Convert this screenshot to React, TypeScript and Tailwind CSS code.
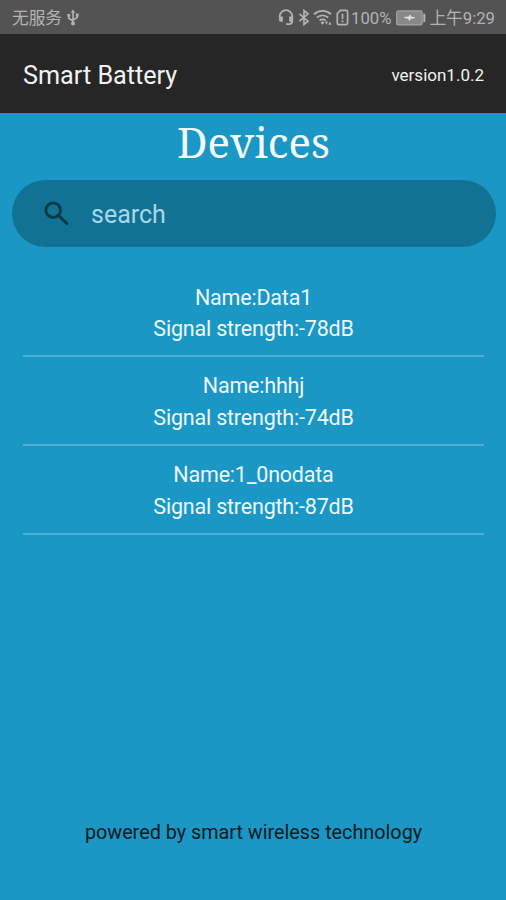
import React, {useState} from 'react';

interface Device {
    name: string;
    signal: number;
}

const DEVICES: Device[] = [
    {name: 'Data1', signal: -78},
    {name: 'hhhj', signal: -74},
    {name: '1_0nodata', signal: -87},
];

function UsbIcon() {
    return (
        <svg width="12" height="18" viewBox="0 0 12 18" fill="none" stroke="currentColor" strokeWidth="1.6">
            <path d="M6 3v11M1.8 7v2.2L6 12M10.2 6v2.5L6 11"/>
            <path d="M6 .6l2.3 3.2H3.7zM.4 5h2.8v2.8H.4zM8.8 4.6h2.8v2.8H8.8z" fill="currentColor" stroke="none"/>
            <circle cx="6" cy="14.4" r="2" fill="currentColor" stroke="none"/>
        </svg>
    );
}

function HeadsetIcon() {
    return (
        <svg width="16" height="17" viewBox="0 0 16 17" fill="none" stroke="currentColor" strokeWidth="1.7">
            <path d="M1.7 9V7.5a6.3 6.3 0 0 1 12.6 0V12c0 2-1.5 3.2-3.3 3.2H8"/>
            <path d="M1 7.5h3.8v5.3H3a2 2 0 0 1-2-2zM11.2 7.5H15v5.3h-3.8z" fill="currentColor" stroke="none"/>
        </svg>
    );
}

function BluetoothIcon() {
    return (
        <svg width="12" height="17" viewBox="0 0 12 17" fill="none" stroke="currentColor" strokeWidth="1.7">
            <path d="M1.5 4.8l8.5 7.4-4 3.3v-14l4 3.3-8.5 7.4"/>
        </svg>
    );
}

function WifiIcon() {
    return (
        <svg width="20" height="17" viewBox="0 0 20 17" fill="none" stroke="currentColor" strokeWidth="1.9">
            <path d="M1 5.2a12.5 12.5 0 0 1 17 0M3.8 8.6a8.3 8.3 0 0 1 11.4 0M6.5 11.6a4.3 4.3 0 0 1 6 0"/>
            <path d="M7.5 13.4l2-1.2 2 1.2-2 2.4zM12 12.6h3L13.5 15.8zM15.4 15.8l1.5-3.2 1.5 3.2z" fill="currentColor" stroke="none"/>
        </svg>
    );
}

function SimAlertIcon() {
    return (
        <svg width="13" height="17" viewBox="0 0 13 17" fill="none" stroke="currentColor" strokeWidth="1.7">
            <path d="M4.5 1.3H10q1.6 0 1.6 1.6v11.2q0 1.5-1.6 1.5H2.8q-1.5 0-1.5-1.5V4.5z"/>
            <path d="M6.5 4.8v5.2M6.5 11.3v1.9"/>
        </svg>
    );
}

function BatteryIcon() {
    return (
        <svg width="30" height="16" viewBox="0 0 30 16">
            <rect x=".7" y=".9" width="25.4" height="14" rx="1.5" fill="#888888" stroke="#a3a3a3" strokeWidth="1.2"/>
            <path d="M27.3 3.5h.6q1.4 0 1.4 1.4v6q0 1.4-1.4 1.4h-.6z" fill="#b3b3b3"/>
            <path d="M8 7.5l5-.7 1-2 .8 2 4 .9-4.3.9-1.2 2-.8-2z" fill="#e2e2e2" stroke="#e2e2e2" strokeWidth=".7"/>
        </svg>
    );
}

function StatusBar() {
    return (
        <div className="flex h-[34px] shrink-0 items-center bg-[#535353] pt-0.5 pr-[11px] pl-3 font-['Roboto','Noto_Sans_CJK_SC',sans-serif] text-[16.7px] leading-none text-[#b3b3b3]">
            <span className="pt-0.5">无服务</span>
            <span className="ml-[5px]"><UsbIcon/></span>
            <div className="ml-auto flex items-center">
                <HeadsetIcon/>
                <span className="ml-1"><BluetoothIcon/></span>
                <span className="ml-[3px]"><WifiIcon/></span>
                <span className="ml-[3px]"><SimAlertIcon/></span>
                <span className="ml-0.5 pt-0.5">100%</span>
                <span className="ml-[5px]"><BatteryIcon/></span>
                <span className="ml-[3px] pt-0.5">上午9:29</span>
            </div>
        </div>
    );
}

export default function App() {
    const [query, setQuery] = useState('');

    const visibleDevices = DEVICES.filter(device => device.name.toLowerCase().includes(query.toLowerCase()));

    return (
        <div className="flex h-[900px] w-full flex-col bg-[#1a97c5] font-['Roboto',sans-serif]">
            <StatusBar/>

            <header className="flex h-[79px] shrink-0 items-center justify-between bg-[#262626] pt-1 pr-[22px] pl-[23px] text-[#f2f2f2]">
                <span className="text-[25.2px]">Smart Battery</span>
                <span className="text-[17px]">version1.0.2</span>
            </header>

            <h1 className="h-[67px] shrink-0 pl-px text-center font-['Noto_Serif','DejaVu_Serif',serif] text-[42px] leading-[58px] text-[#f4fbff]">
                Devices
            </h1>

            <label className="mr-2.5 ml-3 flex h-[67px] shrink-0 items-center rounded-full bg-[#127294] pl-8">
                <svg width="26" height="26" viewBox="0 0 26 26" fill="none" stroke="#07394b" strokeWidth="2.8">
                    <circle cx="9.2" cy="9.2" r="7.3"/>
                    <path d="M14.6 14.6l9.2 9"/>
                </svg>
                <input
                    className="ml-[21px] w-72 bg-transparent pt-0.5 text-[25px] text-[#a5d8ea] outline-none placeholder:text-[#a5d8ea]"
                    placeholder="search"
                    value={query}
                    onChange={(e) => setQuery(e.target.value)}
                />
            </label>

            <ul className="mr-[22px] ml-[23px] mt-[21px] text-center text-[21.5px] leading-[31.5px] tracking-[-0.2px] text-[#edf8fd]">
                {visibleDevices.map(device => (
                    <li key={device.name} className="h-[88.9px] border-b-2 border-[#4fb0d5] pt-[13.5px]">
                        <p>Name:{device.name}</p>
                        <p>Signal strength:{device.signal}dB</p>
                    </li>
                ))}
            </ul>

            <footer className="mt-auto pb-[51px] pl-px text-center text-[19.8px] leading-8 text-[#061a22]">
                powered by smart wireless technology
            </footer>
        </div>
    );
}
